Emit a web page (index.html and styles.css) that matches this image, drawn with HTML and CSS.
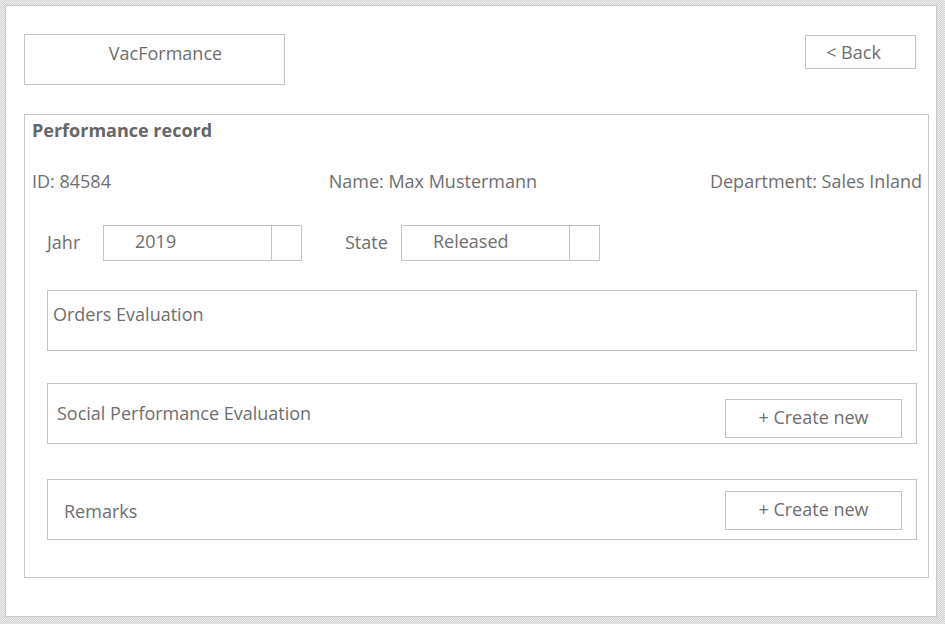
FILE: index.html
```html
<!DOCTYPE html>
<html lang="en">
<head>
<meta charset="utf-8">
<title>VacFormance</title>
<link rel="stylesheet" href="styles.css">
</head>
<body>
<div class="frame">
  <header class="header">
    <div class="logo-box">VacFormance</div>
    <button class="back-btn">&lt; Back</button>
  </header>
  <section class="panel">
    <h1 class="panel-title">Performance record</h1>
    <div class="info-row">
      <div class="info">ID: 84584</div>
      <div class="info">Name: Max Mustermann</div>
      <div class="info info-right">Department: Sales Inland</div>
    </div>
    <div class="form-row">
      <div class="field">
        <span class="field-label">Jahr</span>
        <div class="select"><span class="select-value">2019</span><span class="select-arrow"></span></div>
      </div>
      <div class="field field-state">
        <span class="field-label">State</span>
        <div class="select"><span class="select-value">Released</span><span class="select-arrow"></span></div>
      </div>
    </div>
    <div class="section section-orders">
      <div class="section-title">Orders Evaluation</div>
    </div>
    <div class="section section-social">
      <div class="section-title">Social Performance Evaluation</div>
      <button class="create-btn">+ Create new</button>
    </div>
    <div class="section section-remarks">
      <div class="section-title">Remarks</div>
      <button class="create-btn">+ Create new</button>
    </div>
  </section>
</div>
</body>
</html>
```
FILE: styles.css
```css
html, body {
  margin: 0;
  padding: 0;
}
body {
  width: 945px;
  height: 624px;
  overflow: hidden;
  background: repeating-conic-gradient(#d2d2d2 0 25%, #ededed 0 50%) 0 0 / 2px 2px;
  font-family: "Open Sans", "Noto Sans", sans-serif;
  color: #6e6e6e;
  padding: 5px 8px 7px 5px;
  box-sizing: border-box;
}
.frame {
  height: 612px;
  background: #fff;
  border: 1px solid #c9c9c9;
  box-sizing: border-box;
  padding: 28px 0 0 18px;
}
.header {
  display: flex;
  justify-content: space-between;
  align-items: flex-start;
  padding-right: 20px;
}
.logo-box {
  width: 261px;
  height: 51px;
  box-sizing: border-box;
  border: 1px solid #c4c4c4;
  text-align: center;
  font-size: 18px;
  line-height: 22px;
  padding: 7px 0 0 22px;
}
.back-btn {
  margin-top: 1px;
  width: 111px;
  height: 34px;
  box-sizing: border-box;
  border: 1px solid #c4c4c4;
  background: #fff;
  font-family: inherit;
  color: inherit;
  font-size: 18px;
  line-height: 22px;
  padding: 0 14px 0 0;
  text-align: center;
}
.panel {
  margin: 29px 7px 0 0;
  height: 464px;
  box-sizing: border-box;
  border: 1px solid #c9c9c9;
  padding: 3px 6px 0 7px;
}
.panel-title {
  margin: 0;
  font-size: 18px;
  font-weight: 700;
  line-height: 24px;
  color: #666;
}
.info-row {
  display: grid;
  grid-template-columns: 1fr 1fr 1fr;
  margin-top: 27px;
  font-size: 18px;
  line-height: 24px;
}
.info-right {
  text-align: right;
}
.form-row {
  display: flex;
  margin-top: 32px;
  padding-left: 15px;
}
.field {
  display: flex;
  align-items: center;
}
.field-state {
  margin-left: 43px;
}
.field-label {
  width: 56px;
  font-size: 18px;
  line-height: 24px;
  padding-bottom: 3px;
}
.select {
  display: flex;
  width: 199px;
  height: 36px;
  box-sizing: border-box;
  border: 1px solid #c4c4c4;
}
.select-value {
  flex: 1;
  padding-left: 31px;
  font-size: 18px;
  line-height: 30px;
}
.select-arrow {
  width: 29px;
  border-left: 1px solid #c4c4c4;
}
.section {
  margin: 0 5px 0 15px;
  height: 61px;
  box-sizing: border-box;
  border: 1px solid #c4c4c4;
  display: flex;
  justify-content: space-between;
  align-items: flex-start;
  font-size: 18px;
}
.section-orders {
  margin-top: 29px;
}
.section-orders .section-title {
  padding: 11px 0 0 5px;
  line-height: 24px;
}
.section-social {
  margin-top: 32px;
}
.section-social .section-title {
  padding: 17px 0 0 9px;
  line-height: 24px;
}
.section-remarks {
  margin-top: 35px;
}
.section-remarks .section-title {
  padding: 19px 0 0 16px;
  line-height: 24px;
}
.create-btn {
  margin-right: 14px;
  width: 177px;
  height: 39px;
  box-sizing: border-box;
  border: 1px solid #c4c4c4;
  background: #fff;
  font-family: inherit;
  color: inherit;
  font-size: 18px;
  line-height: 22px;
  padding: 0 0 4px 0;
  text-align: center;
}
.section-social .create-btn {
  margin-top: 15px;
}
.section-remarks .create-btn {
  margin-top: 11px;
}
```
